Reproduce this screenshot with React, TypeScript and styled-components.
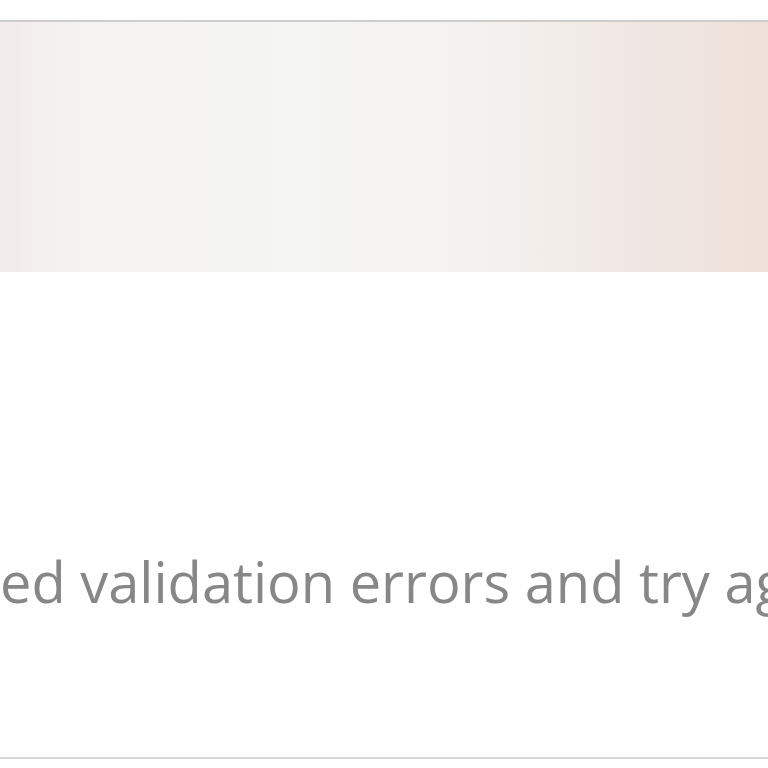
import styled, { createGlobalStyle } from 'styled-components'

const GlobalStyle = createGlobalStyle`
  html, body {
    margin: 0;
    padding: 0;
    background: #ffffff;
    overflow: hidden;
  }
`

const Viewport = styled.div`
  width: 768px;
  height: 768px;
  overflow: hidden;
  padding-top: 20px;
  box-sizing: border-box;
`

const Card = styled.div`
  width: 768px;
  height: 739px;
  border-top: 2px solid #cdcdcd;
  border-bottom: 2px solid #d6d6d6;
  display: flex;
  flex-direction: column;
  background: #ffffff;
  box-sizing: border-box;
`

const Banner = styled.div`
  height: 250px;
  flex: none;
  background: linear-gradient(
    90deg,
    #f1ebea 0%,
    #f3f0ef 6%,
    #f5f4f3 14%,
    #f5f5f4 40%,
    #f4f2f0 60%,
    #f2ede9 72%,
    #efe7e4 82%,
    #efe3dc 94%,
    #efe1d9 100%
  );
`

const Body = styled.div`
  flex: 1;
  display: flex;
  align-items: flex-start;
  padding-top: 271px;
`

const Message = styled.p`
  margin: 0;
  white-space: nowrap;
  font-family: 'Open Sans', 'Liberation Sans', sans-serif;
  font-size: 56px;
  line-height: 76px;
  color: #878787;
`

const App = () => (
  <>
    <GlobalStyle />
    <Viewport>
      <Card>
        <Banner />
        <Body>
          <Message>ed validation errors and try again.</Message>
        </Body>
      </Card>
    </Viewport>
  </>
)

export default App
